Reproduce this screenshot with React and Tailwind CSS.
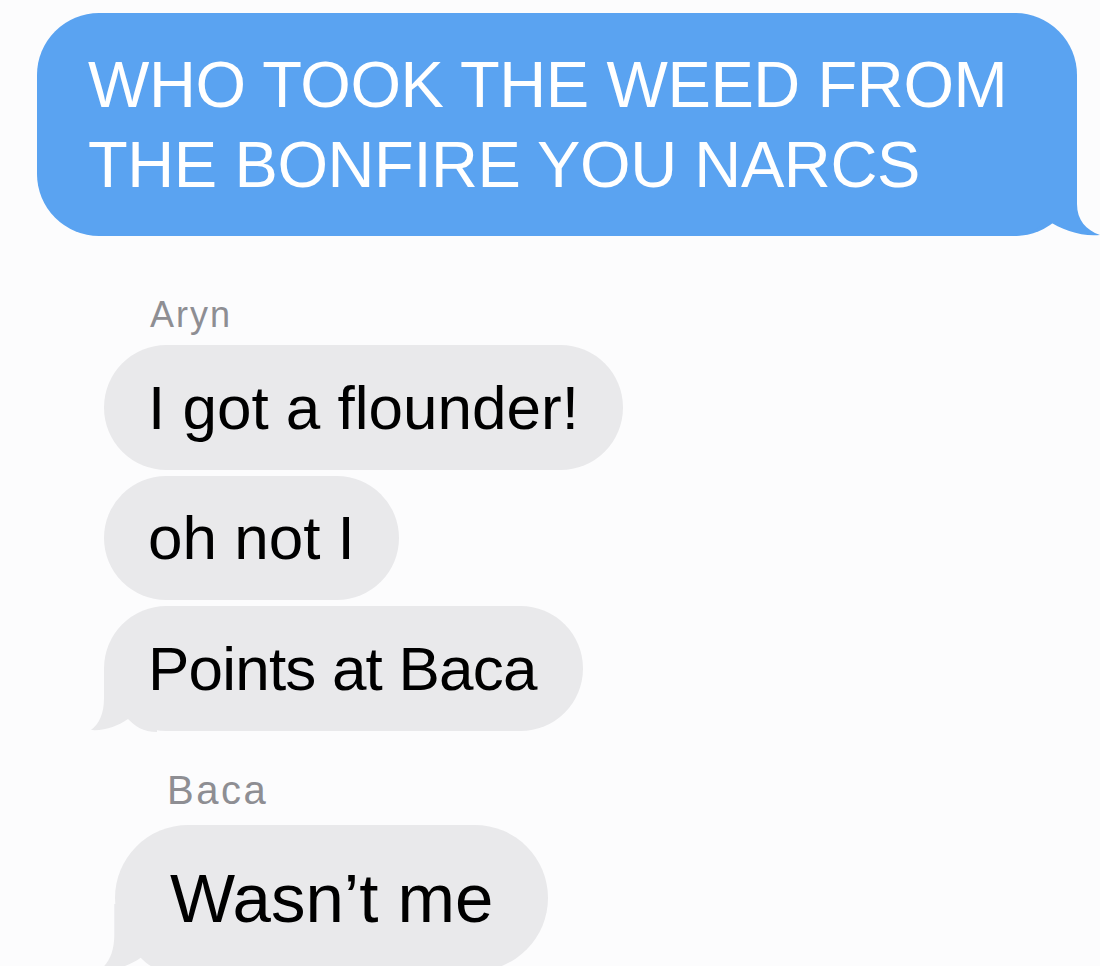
import React from 'react';

/**
 * Group chat screenshot: one outgoing blue bubble, two incoming threads.
 */

const font = { fontFamily: '"Liberation Sans", Arial, sans-serif' };

function BlueTail() {
  return (
    <svg
      className="absolute right-[-23px] bottom-0"
      width="88"
      height="68"
      viewBox="0 0 88 68"
    >
      <path
        d="M65 0 L65 36 C65 52 74 62 88 67 C70 69 50 62 35 52 C27 60 16 68 0 68 L0 0 Z"
        fill="#5aa3f1"
      />
    </svg>
  );
}

function GrayTail({ className = '' }) {
  return (
    <svg className={`absolute ${className}`} width="66" height="62" viewBox="0 0 66 62">
      <path
        d="M13 0 L13 28 C13 44 8 54 0 60 C14 61 27 56 37 49 C44 56 52 62 66 62 L66 0 Z"
        fill="#e9e9eb"
      />
    </svg>
  );
}

function Bubble({ children, tail, className = '' }) {
  return (
    <div
      className={`relative flex items-center self-start rounded-full bg-[#e9e9eb] text-black ${className}`}
    >
      {tail}
      <span className="relative">{children}</span>
    </div>
  );
}

export default function App() {
  return (
    <div className="h-[966px] w-[1100px] overflow-hidden bg-[#fcfcfd]" style={font}>
      <div className="flex flex-col">
        <div className="relative ml-[37px] mt-[13px] h-[223px] w-[1040px] rounded-[62px] bg-[#5aa3f1] pl-[51px] pt-[32px]">
          <BlueTail />
          <p className="relative text-[65px] leading-[80px] tracking-[-0.4px] text-white">
            WHO TOOK THE WEED FROM
            <br />
            THE BONFIRE YOU NARCS
          </p>
        </div>

        <div className="mt-[61px] flex flex-col">
          <span className="ml-[150px] text-[36px] leading-[36px] tracking-[2px] text-[#8e8e93]">
            Aryn
          </span>
          <div className="ml-[104px] mt-[12px] flex flex-col gap-[6px]">
            <Bubble className="h-[125px] px-[44px] text-[62px] leading-[62px]">
              I got a flounder!
            </Bubble>
            <Bubble className="h-[124px] px-[44px] text-[62px] leading-[62px]">
              oh not I
            </Bubble>
            <Bubble
              className="h-[125px] pl-[44px] pr-[46px] text-[62px] leading-[62px] tracking-[-0.8px]"
              tail={<GrayTail className="left-[-13px] bottom-[-1px]" />}
            >
              Points at Baca
            </Bubble>
          </div>
        </div>

        <div className="mt-[39px] flex flex-col">
          <span className="ml-[167px] text-[40px] leading-[40px] tracking-[2.5px] text-[#8e8e93]">
            Baca
          </span>
          <div className="ml-[115px] mt-[15px] flex flex-col">
            <Bubble
              className="h-[146px] px-[55px] text-[69px] leading-[69px]"
              tail={<GrayTail className="left-[-15px] bottom-[-1px] scale-110 origin-bottom-left" />}
            >
              Wasn’t me
            </Bubble>
          </div>
        </div>
      </div>
    </div>
  );
}
